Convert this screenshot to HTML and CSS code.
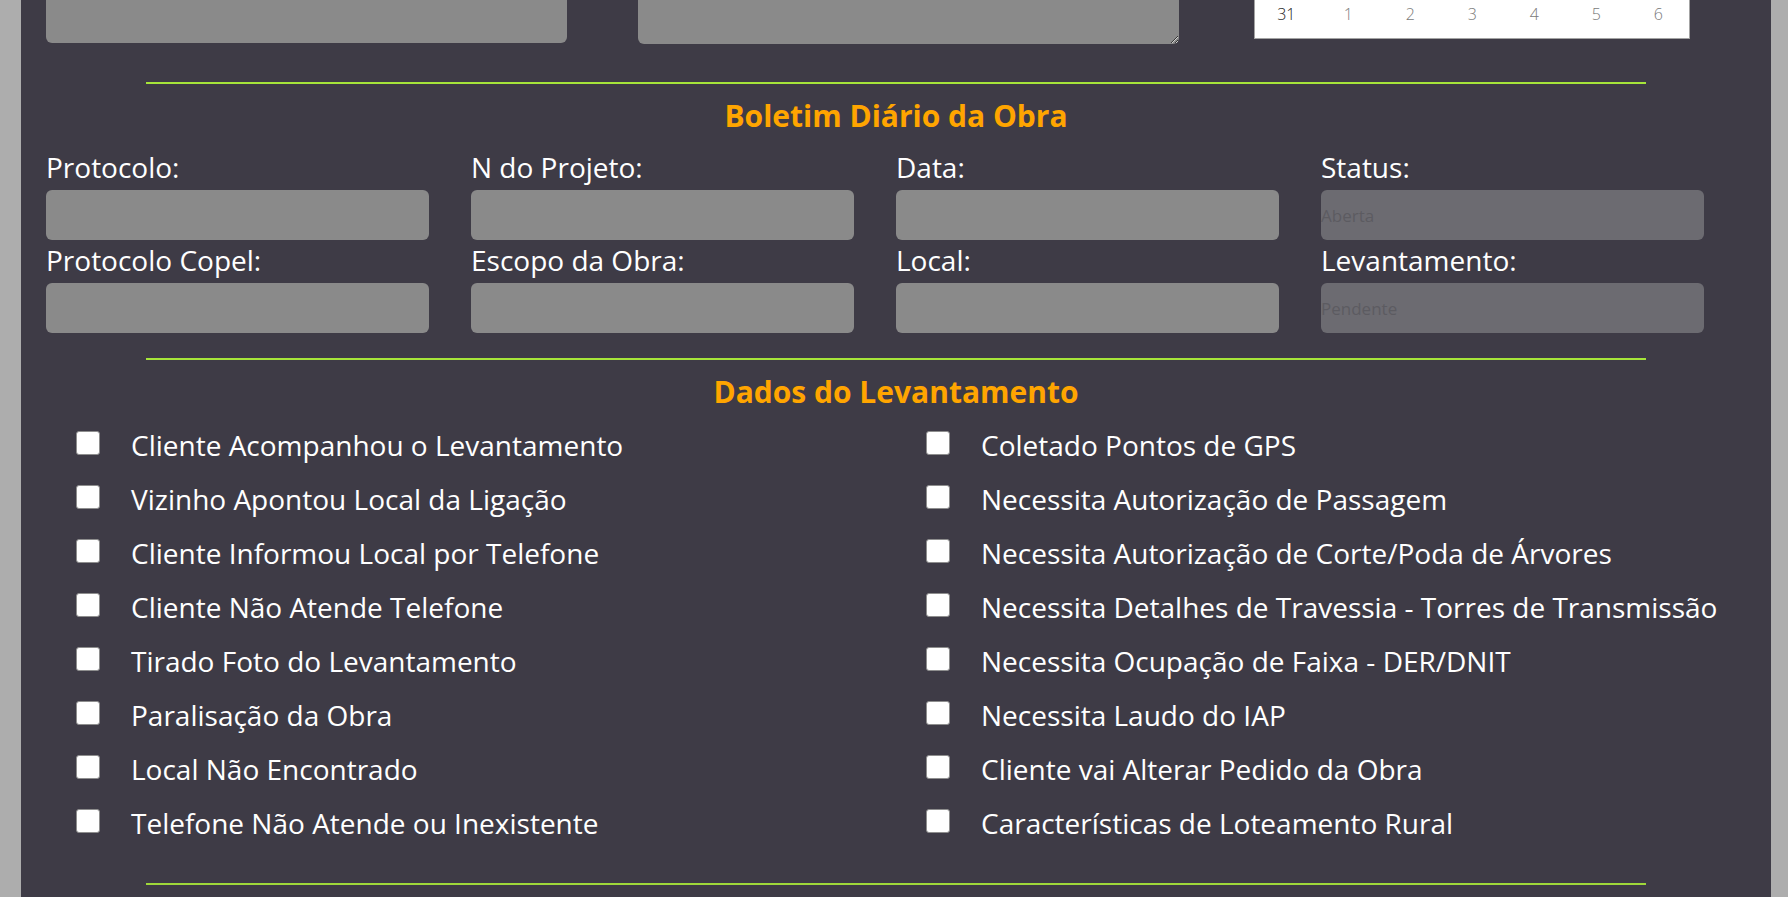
FILE: index.html
```html
<!DOCTYPE html>
<html lang="pt-BR">
<head>
<meta charset="utf-8">
<title>Boletim Diário da Obra</title>
<link rel="stylesheet" href="styles.css">
</head>
<body>
<main class="page">
  <section class="top-row">
    <textarea class="note note-a"></textarea>
    <textarea class="note note-b"></textarea>
    <div class="calendar">
      <div class="cal-week">
        <span class="day">31</span><span class="day next">1</span><span class="day next">2</span><span class="day next">3</span><span class="day next">4</span><span class="day next">5</span><span class="day next">6</span>
      </div>
    </div>
  </section>

  <hr class="divider divider-first">
  <h2 class="section-title">Boletim Diário da Obra</h2>

  <div class="fields">
    <div class="field"><label class="field-label">Protocolo:</label><input class="field-input" type="text"></div>
    <div class="field"><label class="field-label">N do Projeto:</label><input class="field-input" type="text"></div>
    <div class="field"><label class="field-label">Data:</label><input class="field-input" type="text"></div>
    <div class="field"><label class="field-label">Status:</label><input class="field-input locked" type="text" placeholder="Aberta" disabled></div>
    <div class="field"><label class="field-label">Protocolo Copel:</label><input class="field-input" type="text"></div>
    <div class="field"><label class="field-label">Escopo da Obra:</label><input class="field-input" type="text"></div>
    <div class="field"><label class="field-label">Local:</label><input class="field-input" type="text"></div>
    <div class="field"><label class="field-label">Levantamento:</label><input class="field-input locked" type="text" placeholder="Pendente" disabled></div>
  </div>

  <hr class="divider divider-mid">
  <h2 class="section-title">Dados do Levantamento</h2>

  <div class="checklist">
    <div class="check-col">
      <label class="check"><input type="checkbox" class="box"><span>Cliente Acompanhou o Levantamento</span></label>
      <label class="check"><input type="checkbox" class="box"><span>Vizinho Apontou Local da Ligação</span></label>
      <label class="check"><input type="checkbox" class="box"><span>Cliente Informou Local por Telefone</span></label>
      <label class="check"><input type="checkbox" class="box"><span>Cliente Não Atende Telefone</span></label>
      <label class="check"><input type="checkbox" class="box"><span>Tirado Foto do Levantamento</span></label>
      <label class="check"><input type="checkbox" class="box"><span>Paralisação da Obra</span></label>
      <label class="check"><input type="checkbox" class="box"><span>Local Não Encontrado</span></label>
      <label class="check"><input type="checkbox" class="box"><span>Telefone Não Atende ou Inexistente</span></label>
    </div>
    <div class="check-col">
      <label class="check"><input type="checkbox" class="box"><span>Coletado Pontos de GPS</span></label>
      <label class="check"><input type="checkbox" class="box"><span>Necessita Autorização de Passagem</span></label>
      <label class="check"><input type="checkbox" class="box"><span>Necessita Autorização de Corte/Poda de Árvores</span></label>
      <label class="check"><input type="checkbox" class="box"><span>Necessita Detalhes de Travessia - Torres de Transmissão</span></label>
      <label class="check"><input type="checkbox" class="box"><span>Necessita Ocupação de Faixa - DER/DNIT</span></label>
      <label class="check"><input type="checkbox" class="box"><span>Necessita Laudo do IAP</span></label>
      <label class="check"><input type="checkbox" class="box"><span>Cliente vai Alterar Pedido da Obra</span></label>
      <label class="check"><input type="checkbox" class="box"><span>Características de Loteamento Rural</span></label>
    </div>
  </div>

  <hr class="divider divider-last">
</main>
</body>
</html>
```

FILE: styles.css
```css
html, body {
  margin: 0;
  padding: 0;
}

body {
  background: #adadad;
  font-family: "Open Sans", "Liberation Sans", sans-serif;
  color: #ffffff;
  overflow: hidden;
}

.page {
  display: flow-root;
  margin: 0 17px 0 21px;
  padding: 0 25px 40px;
  background: #3e3b46;
  min-height: 100vh;
  box-sizing: border-box;
}

.top-row {
  display: grid;
  grid-template-columns: repeat(3, 1fr);
  align-items: start;
  margin-top: -80px;
}

.note {
  display: block;
  box-sizing: border-box;
  border: none;
  background: #8a8a8a;
  border-radius: 6px;
  padding: 4px;
  margin: 0;
  font-family: inherit;
}

.note-a {
  width: 521px;
  height: 123px;
  resize: none;
}

.note-b {
  width: 541px;
  height: 124px;
  margin-left: 25px;
  resize: vertical;
}

.calendar {
  box-sizing: border-box;
  width: 436px;
  height: 119px;
  margin-left: 75px;
  background: #ffffff;
  border: 1px solid #a3a3a3;
  display: flex;
  flex-direction: column;
  justify-content: flex-end;
  padding-bottom: 10px;
}

.cal-week {
  display: grid;
  grid-template-columns: repeat(7, 1fr);
  height: 28px;
  line-height: 28px;
  text-align: center;
  font-size: 16px;
  font-weight: 300;
  color: #222222;
}

.day.next {
  color: #7a7a7a;
}

.divider {
  border: 0;
  height: 2px;
  width: 88.25%;
  background: #a6e53a;
  margin: 0 auto;
}

.divider-first {
  margin-top: 38px;
}

.divider-mid {
  margin-top: 25px;
}

.divider-last {
  margin-top: 33px;
  background: #9fd83a;
}

.section-title {
  margin: 12px 0 0;
  text-align: center;
  color: #ffa500;
  font-size: 30px;
  font-weight: 700;
  line-height: 40px;
}

.fields {
  display: grid;
  grid-template-columns: repeat(4, 1fr);
  margin-top: 11px;
}

.field-label {
  display: block;
  font-size: 28px;
  line-height: 40px;
  height: 40px;
  margin-bottom: 3px;
  white-space: nowrap;
}

.field-input {
  display: block;
  box-sizing: border-box;
  width: 90%;
  height: 50px;
  margin: 0;
  padding: 0;
  border: none;
  border-radius: 6px;
  background: #8a8a8a;
  font-family: inherit;
  font-size: 17px;
  color: #222;
}

.field-input.locked {
  background: #6c6b71;
}

.field-input.locked::placeholder {
  color: #5c5b61;
}

.checklist {
  display: grid;
  grid-template-columns: 1fr 1fr;
  margin-top: 6px;
}

.check-col {
  display: flex;
  flex-direction: column;
}

.check {
  display: flex;
  align-items: flex-start;
  height: 54px;
  line-height: 54px;
  padding-left: 30px;
  font-size: 28px;
  white-space: nowrap;
}

.box {
  appearance: none;
  -webkit-appearance: none;
  flex: none;
  width: 24px;
  height: 24px;
  margin: 13px 31px 0 0;
  background: #ffffff;
  border: 1px solid #8e8e8e;
  border-radius: 3px;
  box-sizing: border-box;
}
```
